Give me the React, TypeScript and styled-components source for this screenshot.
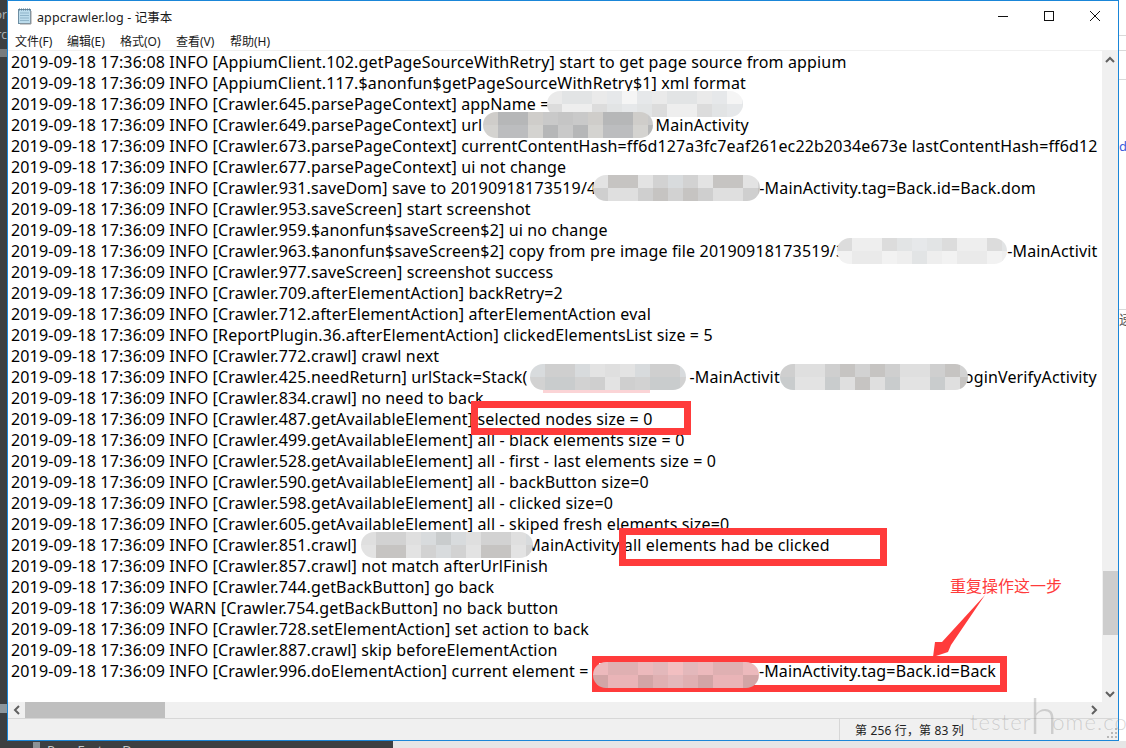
import React from "react";
import styled, { createGlobalStyle } from "styled-components";

const Global = createGlobalStyle`
  html, body { margin: 0; padding: 0; background: #3c3f41; }
  #root { width: 1126px; height: 748px; overflow: hidden; }
`;

const UI_FONT = `"Noto Sans", "Noto Sans CJK SC", sans-serif`;

const Desktop = styled.div`
  position: relative;
  width: 1126px;
  height: 748px;
  display: grid;
  grid-template-columns: 7px 1112px 7px;
  grid-template-rows: 741px 7px;
  overflow: hidden;
  font-family: ${UI_FONT};
`;

const LeftRail = styled.div`
  background: #3c3f41;
  display: flex;
  flex-direction: column;
  overflow: hidden;
`;

const RailText = styled.div<{ $top: number }>`
  margin-top: ${(p) => p.$top}px;
  height: 12px;
  line-height: 12px;
  font-size: 12px;
  color: #a9b0b4;
  white-space: nowrap;
  direction: rtl;
`;

const RailSelection = styled.div<{ $top: number; $h: number }>`
  margin-top: ${(p) => p.$top}px;
  height: ${(p) => p.$h}px;
  flex: none;
  background: ${(p) => (p.$top > 100 ? "#8d979d" : "#767b7e")};
`;

const RightRail = styled.div`
  background: #fff;
  display: flex;
  flex-direction: column;
  overflow: hidden;
`;

const RailRule = styled.div<{ $top: number }>`
  margin-top: ${(p) => p.$top}px;
  height: 1px;
  flex: none;
  background: #d9d9d9;
`;

const RailLink = styled.div<{ $top: number; $color: string }>`
  margin-top: ${(p) => p.$top}px;
  height: 16px;
  line-height: 16px;
  font-size: 13px;
  color: ${(p) => p.$color};
  white-space: nowrap;
  flex: none;
`;

const BottomStrip = styled.div`
  grid-column: 1 / 4;
  display: grid;
  grid-template-columns: 393px 1fr;
  overflow: hidden;
`;

const BottomDark = styled.div`
  background: #3c3f41;
  display: flex;
  align-items: flex-start;
  gap: 7px;
  padding: 2px 0 0 33px;
  color: #c4c8ca;
  font-size: 13px;
  line-height: 14px;
  white-space: nowrap;
`;

const BottomIcon = styled.span`
  flex: none;
  width: 7px;
  height: 7px;
  margin-top: -1px;
  background: #8c9296;
`;

const BottomLight = styled.div`
  background: #e6e6e6;
`;

const Window = styled.div`
  border: 1px solid #1a86d8;
  background: #fff;
  display: flex;
  flex-direction: column;
  min-width: 0;
`;

const TitleBar = styled.div`
  height: 30px;
  flex: none;
  display: flex;
  align-items: center;
  padding: 0 0 0 9px;
`;

const TitleText = styled.div`
  margin-left: 4px;
  font-size: 12.5px;
  letter-spacing: 0.1px;
  color: #1a1a1a;
  white-space: nowrap;
`;

const Controls = styled.div`
  margin-left: auto;
  display: flex;
`;

const ControlButton = styled.div`
  width: 46px;
  height: 30px;
  display: flex;
  align-items: center;
  justify-content: center;
  color: #111;
`;

const MenuBar = styled.div`
  height: 19px;
  flex: none;
  display: flex;
  align-items: center;
  font-size: 12px;
  color: #1a1a1a;
  padding: 0 0 0 7px;
  border-bottom: 1px solid #f0f0f0;
`;

const MenuItem = styled.div<{ $w: number }>`
  width: ${(p) => p.$w}px;
  white-space: nowrap;
`;

const EditorGrid = styled.div`
  flex: 1;
  min-height: 0;
  display: grid;
  grid-template-columns: 1094px 16px;
  grid-template-rows: 651px 16px;
`;

const TextArea = styled.div`
  overflow: hidden;
  padding: 1px 0 0 3px;
  background: #fff;
`;

const Row = styled.div`
  height: 21px;
  line-height: 21px;
  font-size: 16px;
  color: #000;
  white-space: nowrap;
  letter-spacing: 0.15px;
`;

const BlurOuter = styled.span<{ $w: number; $ml: number; $mr: number; $dy: number; $z: number }>`
  display: inline-block;
  position: relative;
  z-index: ${(p) => p.$z};
  width: ${(p) => p.$w}px;
  height: 26px;
  margin: -3px ${(p) => p.$mr}px -2px ${(p) => p.$ml}px;
  top: ${(p) => p.$dy}px;
  vertical-align: top;
  border-radius: 13px;
  overflow: hidden;
`;

const BlurRow = styled.span`
  display: flex;
  height: 13px;
`;

const BlurCell = styled.span`
  flex: 0 0 15px;
  height: 100%;
`;

const VBar = styled.div`
  background: #f0f0f0;
  display: flex;
  flex-direction: column;
  align-items: center;
`;

const VThumb = styled.div`
  margin-top: 503px;
  width: 15px;
  height: 64px;
  background: #cdcdcd;
`;

const ArrowCap = styled.div<{ $end?: boolean }>`
  height: 17px;
  flex: none;
  width: 100%;
  display: flex;
  align-items: center;
  justify-content: center;
  margin-top: ${(p) => (p.$end ? "auto" : "0")};
`;

const HBar = styled.div`
  background: #f0f0f0;
  display: flex;
  align-items: stretch;
`;

const HCap = styled.div`
  width: 17px;
  flex: none;
  display: flex;
  align-items: center;
  justify-content: center;
`;

const HThumb = styled.div`
  width: 140px;
  background: #bfbfbf;
`;

const HEnd = styled(HCap)`
  margin-left: auto;
`;

const Corner = styled.div`
  background: #f0f0f0;
`;

const StatusBar = styled.div`
  height: 21px;
  flex: none;
  border-top: 1px solid #d7d7d7;
  background: #f0f0f0;
  display: flex;
  align-items: center;
  font-size: 12px;
  color: #222;
  padding-left: 831px;
`;

const StatusCell = styled.div`
  height: 100%;
  border-left: 1px solid #d7d7d7;
  padding-left: 15px;
  display: flex;
  align-items: center;
  white-space: nowrap;
  letter-spacing: 0.15px;
`;

const Annotation = styled.div<{ $x: number; $y: number; $w: number; $h: number }>`
  position: absolute;
  left: ${(p) => p.$x}px;
  top: ${(p) => p.$y}px;
  width: ${(p) => p.$w}px;
  height: ${(p) => p.$h}px;
  box-sizing: border-box;
  border: 7px solid #ff3b3b;
  z-index: 5;
`;

const Smudge = styled.div`
  position: absolute;
  left: 543px;
  top: 390px;
  width: 107px;
  height: 3px;
  background: #fbd4d6;
  z-index: 4;
`;

const Callout = styled.div`
  position: absolute;
  left: 950px;
  top: 576px;
  font-size: 16px;
  line-height: 20px;
  color: #ff3b3b;
  white-space: nowrap;
  z-index: 5;
`;

const ArrowSvg = styled.svg`
  position: absolute;
  left: 925px;
  top: 590px;
  z-index: 5;
`;

const Watermark = styled.div`
  position: absolute;
  left: 970px;
  top: 694px;
  height: 42px;
  display: flex;
  align-items: flex-end;
  font-family: "Lato", sans-serif;
  font-weight: 300;
  font-size: 22px;
  line-height: 28px;
  letter-spacing: 1.1px;
  color: rgba(130, 130, 130, 0.32);
  white-space: pre;
  z-index: 6;
`;

const WatermarkTall = styled.span`
  font-size: 50px;
  line-height: 42px;
  font-weight: 300;
  letter-spacing: 0;
  margin: 0 -5px 0 -2px;
`;

const SizeGrip = styled.svg`
  position: absolute;
  left: 1106px;
  top: 727px;
  z-index: 4;
`;

type Tone = "pale" | "light" | "mid" | "pink";

const PALETTE: Record<Tone, string[]> = {
  pale: ["#f2f2f2", "#eaeaea", "#e2e4e5", "#f5f5f5", "#dcdcdc", "#eeeeee", "#e6e8ea"],
  light: ["#dfdfdf", "#d2d2d2", "#c9cccd", "#e3e3e3", "#c6c4c2", "#d8dbdd", "#cfcfcf"],
  mid: ["#c9c9c9", "#c0c2c3", "#cfcdca", "#b6b7b8", "#c5c5c5", "#d4d3d0", "#bcbdbf"],
  pink: ["#e3b8bb", "#d8a9ac", "#ecb9bc", "#dfb0b2", "#f2bfc1", "#d2a5a6", "#e9b4b7"],
};

type BlurProps = { w: number; tone: Tone; seed: number; ml?: number; mr?: number; dy?: number; z?: number };

function Blur({ w, tone, seed, ml = 0, mr = 0, dy = 0, z = 2 }: BlurProps) {
  const n = Math.ceil(w / 15);
  const colors = PALETTE[tone];
  const line = (offset: number) => (
    <BlurRow>
      {Array.from({ length: n }, (_, i) => (
        <BlurCell
          key={i}
          style={{ background: colors[(i * i * 3 + i * 5 + seed + offset) % colors.length] }}
        />
      ))}
    </BlurRow>
  );
  return (
    <BlurOuter $w={w} $ml={ml} $mr={mr} $dy={dy} $z={z}>
      {line(0)}
      {line(3)}
    </BlurOuter>
  );
}

const NotepadIcon = () => (
  <svg width="16" height="17" viewBox="0 0 16 17">
    <rect x="1.5" y="1.5" width="12" height="14" fill="#bcdcec" stroke="#6d8ea3" />
    <path d="M3 5h9M3 7.5h9M3 10h9M3 12.5h9" stroke="#8fb4c9" />
    <path d="M2 1.5h11" stroke="#5b7f96" strokeWidth="2" strokeDasharray="1 1" />
    <path d="M14 3v13H3" fill="none" stroke="#9a9a9a" />
  </svg>
);

const Chevron = ({ d }: { d: string }) => (
  <svg width="10" height="10" viewBox="0 0 10 10">
    <path d={d} fill="none" stroke="#606060" strokeWidth="2" />
  </svg>
);

const Line = ({ t }: { t: string }) => <Row>{"2019-09-18 17:36:09 " + t}</Row>;

export default function App() {
  return (
    <Desktop>
      <Global />
      <LeftRail>
        <RailText $top={9}>or</RailText>
        <RailText $top={8}>rc</RailText>
        <RailSelection $top={8} $h={8} />
        <RailSelection $top={647} $h={9} />
      </LeftRail>
      <Window>
        <TitleBar>
          <NotepadIcon />
          <TitleText>appcrawler.log - 记事本</TitleText>
          <Controls>
            <ControlButton>
              <svg width="10" height="10" viewBox="0 0 10 10">
                <path d="M0 5.5h10" stroke="#111" />
              </svg>
            </ControlButton>
            <ControlButton>
              <svg width="10" height="10" viewBox="0 0 10 10">
                <rect x="0.5" y="0.5" width="9" height="9" fill="none" stroke="#111" />
              </svg>
            </ControlButton>
            <ControlButton>
              <svg width="10" height="10" viewBox="0 0 10 10">
                <path d="M0 0l10 10M10 0L0 10" stroke="#111" />
              </svg>
            </ControlButton>
          </Controls>
        </TitleBar>
        <MenuBar>
          <MenuItem $w={52}>文件(F)</MenuItem>
          <MenuItem $w={53}>编辑(E)</MenuItem>
          <MenuItem $w={56}>格式(O)</MenuItem>
          <MenuItem $w={54}>查看(V)</MenuItem>
          <MenuItem $w={60}>帮助(H)</MenuItem>
        </MenuBar>
        <EditorGrid>
          <TextArea>
            <Row>2019-09-18 17:36:08 INFO [AppiumClient.102.getPageSourceWithRetry] start to get page source from appium</Row>
            <Line t="INFO [AppiumClient.117.$anonfun$getPageSourceWithRetry$1] xml format" />
            <Row>
              2019-09-18 17:36:09 INFO [Crawler.645.parsePageContext] appName =<Blur w={196} tone="pale" seed={1} ml={-3} />
            </Row>
            <Row>
              2019-09-18 17:36:09 INFO [Crawler.649.parsePageContext] url <Blur w={170} tone="mid" seed={2} ml={-4} mr={3} />MainActivity
            </Row>
            <Line t="INFO [Crawler.673.parsePageContext] currentContentHash=ff6d127a3fc7eaf261ec22b2034e673e lastContentHash=ff6d12" />
            <Line t="INFO [Crawler.677.parsePageContext] ui not change" />
            <Row>
              2019-09-18 17:36:09 INFO [Crawler.931.saveDom] save to 20190918173519/4<Blur w={167} tone="light" seed={3} ml={-3} mr={-1} />-MainActivity.tag=Back.id=Back.dom
            </Row>
            <Line t="INFO [Crawler.953.saveScreen] start screenshot" />
            <Line t="INFO [Crawler.959.$anonfun$saveScreen$2] ui no change" />
            <Row>
              2019-09-18 17:36:09 INFO [Crawler.963.$anonfun$saveScreen$2] copy from pre image file 20190918173519/3<Blur w={170} tone="pale" seed={4} ml={-8} />-MainActivit
            </Row>
            <Line t="INFO [Crawler.977.saveScreen] screenshot success" />
            <Line t="INFO [Crawler.709.afterElementAction] backRetry=2" />
            <Line t="INFO [Crawler.712.afterElementAction] afterElementAction eval" />
            <Line t="INFO [ReportPlugin.36.afterElementAction] clickedElementsList size = 5" />
            <Line t="INFO [Crawler.772.crawl] crawl next" />
            <Row>
              2019-09-18 17:36:09 INFO [Crawler.425.needReturn] urlStack=Stack(<Blur w={156} tone="light" seed={5} ml={2} mr={4} />-MainActivit<Blur w={188} tone="light" seed={6} mr={-4} />oginVerifyActivity
            </Row>
            <Line t="INFO [Crawler.834.crawl] no need to back" />
            <Line t="INFO [Crawler.487.getAvailableElement] selected nodes size = 0" />
            <Line t="INFO [Crawler.499.getAvailableElement] all - black elements size = 0" />
            <Line t="INFO [Crawler.528.getAvailableElement] all - first - last elements size = 0" />
            <Line t="INFO [Crawler.590.getAvailableElement] all - backButton size=0" />
            <Line t="INFO [Crawler.598.getAvailableElement] all - clicked size=0" />
            <Line t="INFO [Crawler.605.getAvailableElement] all - skiped fresh elements size=0" />
            <Row>
              2019-09-18 17:36:09 INFO [Crawler.851.crawl] <Blur w={172} tone="light" seed={0} mr={-7} />MainActivity all elements had be clicked
            </Row>
            <Line t="INFO [Crawler.857.crawl] not match afterUrlFinish" />
            <Line t="INFO [Crawler.744.getBackButton] go back" />
            <Line t="WARN [Crawler.754.getBackButton] no back button" />
            <Line t="INFO [Crawler.728.setElementAction] set action to back" />
            <Line t="INFO [Crawler.887.crawl] skip beforeElementAction" />
            <Row>
              2019-09-18 17:36:09 INFO [Crawler.996.doElementAction] current element = <Blur w={166} tone="pink" seed={2} dy={4} z={6} />-MainActivity.tag=Back.id=Back
            </Row>
          </TextArea>
          <VBar>
            <ArrowCap>
              <Chevron d="M1 7l4-4 4 4" />
            </ArrowCap>
            <VThumb />
            <ArrowCap $end>
              <Chevron d="M1 3l4 4 4-4" />
            </ArrowCap>
          </VBar>
          <HBar>
            <HCap>
              <Chevron d="M7 1L3 5l4 4" />
            </HCap>
            <HThumb />
            <HEnd>
              <Chevron d="M3 1l4 4-4 4" />
            </HEnd>
          </HBar>
          <Corner />
        </EditorGrid>
        <StatusBar>
          <StatusCell>第 256 行，第 83 列</StatusCell>
        </StatusBar>
      </Window>
      <RightRail>
        <RailRule $top={35} />
        <RailRule $top={14} />
        <RailRule $top={28} />
        <RailLink $top={58} $color="#3b5bdb">do</RailLink>
        <RailRule $top={155} />
        <RailLink $top={1} $color="#555">速</RailLink>
      </RightRail>
      <BottomStrip>
        <BottomDark>
          <BottomIcon />
          <span>PageFactoryDemo</span>
        </BottomDark>
        <BottomLight />
      </BottomStrip>

      <Smudge />
      <Annotation $x={471} $y={401} $w={220} $h={34} />
      <Annotation $x={619} $y={528} $w={268} $h={38} />
      <Annotation $x={592} $y={656} $w={415} $h={36} />
      <Callout>重复操作这一步</Callout>
      <ArrowSvg width="70" height="70" viewBox="0 0 70 70">
        <polygon points="60,5 26,55 23,62 8,67 10,52 17,52" fill="#ff3b3b" />
      </ArrowSvg>
      <SizeGrip width="12" height="12" viewBox="0 0 12 12">
        <path d="M9 1h2v2H9zM5 5h2v2H5zM9 5h2v2H9zM1 9h2v2H1zM5 9h2v2H5zM9 9h2v2H9z" fill="#b8b8b8" />
      </SizeGrip>
      <Watermark>
        tester
        <WatermarkTall>h</WatermarkTall>
        ome.com
      </Watermark>
    </Desktop>
  );
}
